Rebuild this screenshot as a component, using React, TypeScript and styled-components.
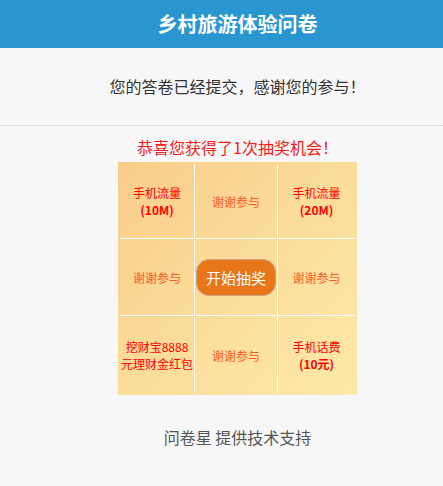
import React from "react";
import styled, { createGlobalStyle } from "styled-components";

const Global = createGlobalStyle`
  html, body { margin: 0; padding: 0; background: #f7f7f7; }
  body { font-family: "Microsoft YaHei", "Noto Sans CJK SC", "Noto Sans", sans-serif; }
`;

const Page = styled.div`
  width: 443px;
  min-height: 486px;
  background: #f7f7f7;
`;

const Header = styled.header`
  height: 48px;
  background: #2a96d0;
  color: #fff;
  font-size: 20px;
  font-weight: bold;
  line-height: 48px;
  text-align: center;
  padding-left: 32px;
`;

const Message = styled.div`
  padding: 26px 0 27px 32px;
  font-size: 16px;
  line-height: 24px;
  color: #333;
  text-align: center;
  border-bottom: 1px dotted #c8c8c8;
`;

const Body = styled.main`
  padding-left: 32px;
  display: flex;
  flex-direction: column;
  align-items: center;
`;

const LotteryTitle = styled.div`
  margin-top: 9px;
  font-size: 16px;
  line-height: 24px;
  color: #f41c1c;
`;

const Board = styled.div`
  margin-top: 3px;
  display: grid;
  grid-template-columns: 75px 80px 78px;
  grid-template-rows: 75px 76px 76px;
  gap: 1px;
  padding: 2px;
  background: linear-gradient(135deg, #f9cd89 0%, #fbdc9a 50%, #fde9aa 100%);
`;

const Cell = styled.div<{ $r?: boolean; $l?: boolean; $b?: boolean }>`
  display: flex;
  flex-direction: column;
  align-items: center;
  justify-content: center;
  text-align: center;
  font-size: 12px;
  line-height: 17px;
  color: #ff0000;
  border-right: ${(p) => (p.$r ? "1px solid #fff" : "none")};
  border-left: ${(p) => (p.$l ? "1px solid #fff" : "none")};
  border-bottom: ${(p) => (p.$b ? "1px solid #fff" : "none")};
`;

const Thanks = styled.span`
  color: #f55a28;
`;

const Bold = styled.span`
  font-weight: bold;
`;

const StartButton = styled.button`
  width: 80px;
  height: 37px;
  border-radius: 13px;
  border: 1px solid #c9a48a;
  background: #e8771a;
  color: #fff;
  font-family: inherit;
  font-size: 15px;
  padding: 0;
  cursor: pointer;
`;

const Footer = styled.div`
  margin-top: 30px;
  font-size: 16px;
  line-height: 24px;
  color: #555;
`;

export default function App() {
  return (
    <Page>
      <Global />
      <Header>乡村旅游体验问卷</Header>
      <Message>您的答卷已经提交，感谢您的参与！</Message>
      <Body>
        <LotteryTitle>恭喜您获得了1次抽奖机会！</LotteryTitle>
        <Board>
          <Cell $r $b>
            <span>手机流量</span>
            <Bold>(10M)</Bold>
          </Cell>
          <Cell $b>
            <Thanks>谢谢参与</Thanks>
          </Cell>
          <Cell $l $b>
            <span>手机流量</span>
            <Bold>(20M)</Bold>
          </Cell>
          <Cell $r $b>
            <Thanks>谢谢参与</Thanks>
          </Cell>
          <Cell $b>
            <StartButton>开始抽奖</StartButton>
          </Cell>
          <Cell $l $b>
            <Thanks>谢谢参与</Thanks>
          </Cell>
          <Cell $r>
            <span>挖财宝8888</span>
            <span>元理财金红包</span>
          </Cell>
          <Cell>
            <Thanks>谢谢参与</Thanks>
          </Cell>
          <Cell $l>
            <span>手机话费</span>
            <Bold>(10元)</Bold>
          </Cell>
        </Board>
        <Footer>问卷星 提供技术支持</Footer>
      </Body>
    </Page>
  );
}
